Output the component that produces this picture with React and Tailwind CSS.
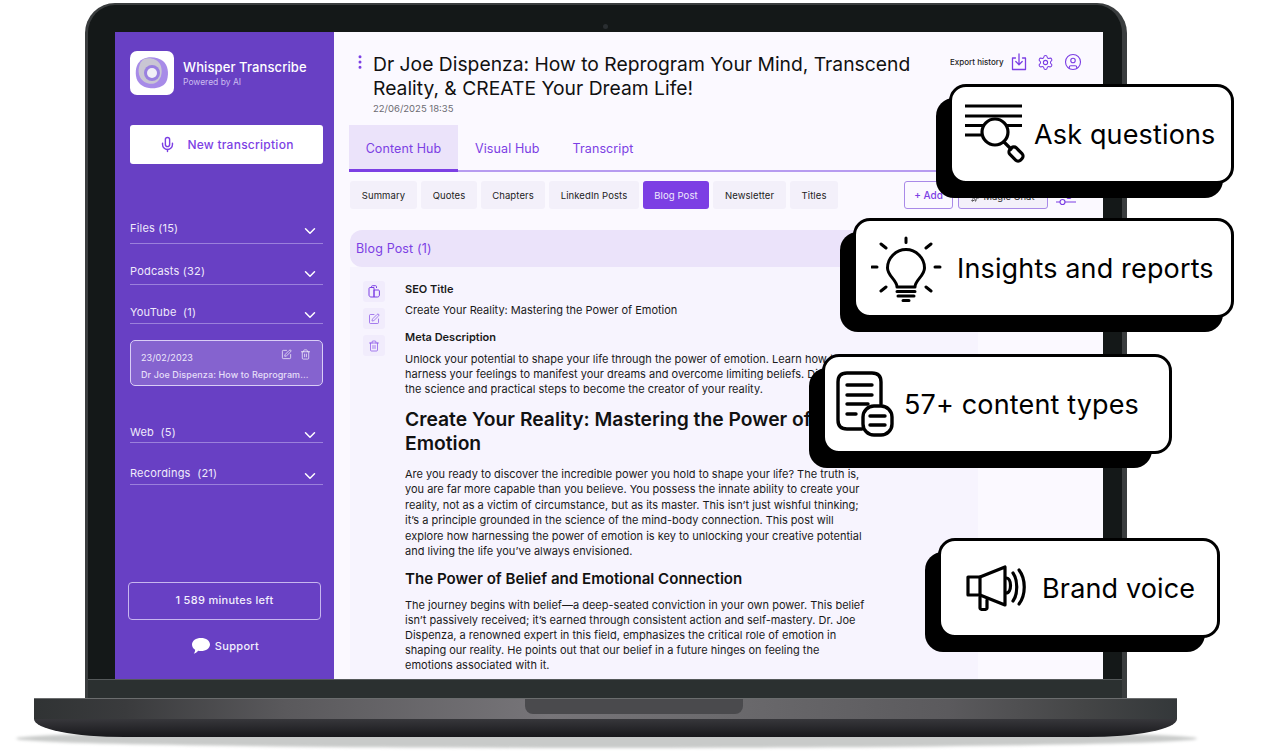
import React from "react";
import { Mic, ChevronDown, SquarePen, Trash2, Settings, CircleUser, EllipsisVertical, Sparkles } from "lucide-react";

const font = { fontFamily: "Inter, 'Liberation Sans', sans-serif" };

const chips = [
  { label: "Summary", w: "w-[67px]" },
  { label: "Quotes", w: "w-[56px]" },
  { label: "Chapters", w: "w-[64px]" },
  { label: "LinkedIn Posts", w: "w-[90px]" },
  { label: "Blog Post", w: "w-[66px]", active: true },
  { label: "Newsletter", w: "w-[73px]" },
  { label: "Titles", w: "w-[48px]" },
];

function Folder({ label, className }) {
  return (
    <div className={`flex w-[193px] items-center justify-between border-b border-[#9b80dc] text-[11px] tracking-[0.2px] whitespace-pre text-[#efeafb] ${className}`}>
      <span>{label}</span>
      <ChevronDown size={18} strokeWidth={2} className="mt-[4px] mr-[4px] text-white" />
    </div>
  );
}

function Logo() {
  return (
    <div className="flex h-[44px] w-[44px] items-center justify-center rounded-[7px] bg-white">
      <svg width="34" height="34" viewBox="0 0 34 34">
        <path d="M8 3 C14 0 23 1 28 5 C33 9 34 17 32 24 C30 31 21 33 14 32 C7 31 2 27 1 20 C0 13 2 6 8 3Z" fill="#a78be8" />
        <path d="M9 3 C15 1 22 3 25 8 C28 14 27 22 22 26 C16 30 8 27 5 21 C2 15 4 6 9 3Z" fill="#c9c6d3" />
        <circle cx="17" cy="17" r="8" fill="#9a80e0" />
        <circle cx="17" cy="17" r="5" fill="#f1eff7" />
      </svg>
    </div>
  );
}

function ExportIcon() {
  return (
    <svg width="16" height="18" viewBox="0 0 16 18" fill="none" stroke="#7c3fe4" strokeWidth="1.3" strokeLinecap="round" strokeLinejoin="round">
      <path d="M4.500 5H1.500V16.500H14.500V5H11.500" />
      <path d="M8 1V11.500M4.800 8.500L8 11.700L11.200 8.500" />
    </svg>
  );
}

function PasteIcon() {
  return (
    <svg width="12" height="13" viewBox="0 0 12 13" fill="none" stroke="#7c3fe4" strokeWidth="1" strokeLinejoin="round">
      <path d="M3.500 3V1.500C3.500 1 4 .7 4.500 .7H7.500C8 .7 8.500 1 8.500 1.500V3" />
      <path d="M1 3.500C1 3 1.500 2.500 2 2.500H6V12H3C1.800 12 1 11 1 10Z" />
      <path d="M6 5H10.500C11 5 11.400 5.500 11.400 6V10C11.400 11.200 10.600 12 9.500 12H6Z" />
    </svg>
  );
}

function ActionButton({ children }) {
  return <div className="flex h-[21px] w-[22px] items-center justify-center rounded-[3px] bg-[#f1ecfc]">{children}</div>;
}

function AskIcon() {
  return (
    <svg width="62" height="60" viewBox="0 0 62 60" fill="none" stroke="#000" strokeWidth="3.2" strokeLinecap="round" strokeLinejoin="round">
      <path d="M1 2H58M1 12H58M1 21.500H19M43 21.500H58M1 31H17" strokeLinecap="butt" />
      <circle cx="31" cy="28" r="13" />
      <path d="M40 38L47 45" />
      <rect x="-4.500" y="-7.500" width="9" height="15" rx="3.500" transform="translate(52 50) rotate(-45)" />
    </svg>
  );
}

function BulbIcon() {
  return (
    <svg width="72" height="70" viewBox="0 0 72 70" fill="none" stroke="#000" strokeWidth="3" strokeLinecap="round" strokeLinejoin="round">
      <g transform="translate(0 1)">
        <path d="M35 4V8.500M10 10L15 14M60 10L55 14M1 33H6M64 33H69M10 57L15 53M60 57L55 53" />
        <path d="M26 53C26 46 16.500 42 16.500 34C16.500 24 25 15.500 35 15.500C45 15.500 53.500 24 53.500 34C53.500 42 44 46 44 53Z" />
        <path d="M26 57.500H44M27 62H43M32 66.500H38" />
      </g>
    </svg>
  );
}

function DocsIcon() {
  return (
    <svg width="58" height="66" viewBox="0 0 58 66" fill="none" stroke="#000" strokeWidth="3.4" strokeLinecap="round" strokeLinejoin="round">
      <path d="M26 58H11C5 58 2 55 2 49V11C2 5 5 2 11 2H36C42 2 45 5 45 11V33" />
      <path d="M11 14H36M11 24H36M11 33H32M11 43H20" />
      <rect x="27" y="35" width="29" height="29" rx="11" fill="#fff" />
      <path d="M34 45H49M34 54H49" />
    </svg>
  );
}

function MegaphoneIcon() {
  return (
    <svg width="62" height="48" viewBox="0 0 62 48" fill="none" stroke="#000" strokeWidth="3.2" strokeLinecap="round" strokeLinejoin="round">
      <path d="M2 13H14L39 3V41L14 31H2Z" />
      <path d="M14 13V31" />
      <path d="M14 33V44C14 46 21 46 21 44V36" />
      <path d="M40 14C46 14 46 29 40 29" />
      <path d="M47 9C52 16 52 30 47 37" />
      <path d="M53 6C60 15 60 31 53 40" />
    </svg>
  );
}

function Callout({ className, shadow, icon, text }) {
  return (
    <div className={`absolute h-[100px] ${className}`}>
      <div className={`absolute top-[14px] -left-[13px] h-[100px] rounded-[18px] bg-black ${shadow}`} />
      <div className="relative flex h-full items-center rounded-[17px] border-[3px] border-black bg-white text-[27px] tracking-[0.15px] whitespace-nowrap text-black" style={font}>
        {icon}
        <span className="pt-[3px]">{text}</span>
      </div>
    </div>
  );
}

export default function App() {
  return (
    <div className="relative h-[751px] w-[1263px] overflow-hidden bg-white" style={font}>
      {/* ground shadow */}
      <div className="absolute top-[729px] left-[16px] h-[19px] w-[1181px] rounded-[50%] bg-[#c8cac9] blur-[1.5px]" />

      <div className="relative pt-[3px]">
        {/* lid */}
        <div className="ml-[85px] w-[1042px] overflow-hidden rounded-t-[30px] border-t-2 border-r-[5px] border-l-[3px] border-[#3a3d3e] bg-[#141818]">
          <div className="flex h-[27px] items-center justify-center">
            <div className="mt-[16px] h-[5px] w-[5px] rounded-full bg-[#2a2e31]" />
          </div>
          <div className="ml-[27px] flex h-[647px] w-[988px] overflow-hidden bg-[#fbf9ff]">
            {/* sidebar */}
            <aside className="flex h-full w-[219px] shrink-0 flex-col bg-[#6840c4] pl-[15px]">
              <div className="mt-[19px] flex items-center gap-[9px]">
                <Logo />
                <div className="pt-[1px]">
                  <div className="text-[13px] leading-[16px] font-medium tracking-[0.1px] text-white">Whisper Transcribe</div>
                  <div className="mt-[1px] text-[8.500px] leading-[12px] text-[#cbbdf0]">Powered by AI</div>
                </div>
              </div>
              <div className="mt-[30px] flex h-[39px] w-[193px] items-center justify-center gap-[11px] rounded-[3px] bg-white text-[12px] font-medium tracking-[0.25px] text-[#7c3fe4]">
                <Mic size={17} strokeWidth={2} />
                New transcription
              </div>
              <Folder label="Files (15)" className="mt-[50px] h-[30px]" />
              <Folder label="Podcasts (32)" className="mt-[15px] h-[26px]" />
              <Folder label="YouTube  (1)" className="mt-[17px] h-[22px]" />
              <div className="mt-[16px] h-[46px] w-[193px] rounded-[5px] border border-[#d9cdf6] bg-[#8563cf] px-[10px] pt-[10px]">
                <div className="flex h-[13px] items-center justify-between pr-[1px] text-[9px] leading-[13px] tracking-[0.1px] text-[#eee9fb]">
                  <span>23/02/2023</span>
                  <span className="mb-[6px] flex gap-[8px] text-white">
                    <SquarePen size={11} strokeWidth={1.5} />
                    <Trash2 size={11} strokeWidth={1.5} />
                  </span>
                </div>
                <div className="mt-[5px] text-[9px] leading-[12px] font-medium tracking-[0.1px] whitespace-nowrap text-[#e6dff9]">Dr Joe Dispenza: How to Reprogram...</div>
              </div>
              <Folder label="Web  (5)" className="mt-[37px] h-[20px]" />
              <Folder label="Recordings  (21)" className="mt-[20px] h-[22px]" />
              <div className="mt-[97px] -ml-[2px] flex h-[38px] w-[193px] items-center justify-center rounded-[4px] border border-[#c7b6ef] pb-[1px] text-[11px] font-medium tracking-[0.3px] text-[#f3effd]">
                1 589 minutes left
              </div>
              <div className="mt-[18px] flex items-center justify-center gap-[5px] pr-[13px] text-[11px] font-medium tracking-[0.3px] text-[#f3effd]">
                <svg width="18" height="16" viewBox="0 0 18 16" fill="#fff">
                  <path d="M9 0C14 0 18 2.700 18 6.500C18 10.300 14 13 9 13C8 13 7 12.900 6.200 12.700C5 14.200 3.200 15.400 1.800 15.700C2.700 14.600 3.200 13.200 3.100 11.800C1.200 10.600 0 8.700 0 6.500C0 2.700 4 0 9 0Z" />
                </svg>
                Support
              </div>
            </aside>

            {/* main */}
            <main className="min-w-0 flex-1 pl-[15px] text-[#111]">
              <div className="relative h-[93px]">
                <EllipsisVertical size={18} strokeWidth={2} className="absolute top-[21px] left-[2px] text-[#7c3fe4]" />
                <div className="flex pt-[20px] pl-[24px]">
                  <div className="w-[560px] shrink-0">
                    <h1 className="text-[19.300px] leading-[24px] font-normal whitespace-nowrap text-[#111]">
                      Dr Joe Dispenza: How to Reprogram Your Mind, Transcend
                      <br />
                      Reality, &amp; CREATE Your Dream Life!
                    </h1>
                    <div className="mt-[2px] text-[9.500px] leading-[14px] text-[#6b6b72]">22/06/2025 18:35</div>
                  </div>
                  <div className="ml-[17px] flex h-[20px] items-center text-[8px] font-medium whitespace-nowrap text-[#222]">
                    Export history
                    <span className="ml-[7px]"><ExportIcon /></span>
                    <Settings size={17} strokeWidth={1.5} className="ml-[10px] text-[#7c3fe4]" />
                    <CircleUser size={18} strokeWidth={1.5} className="ml-[10px] text-[#7c3fe4]" />
                  </div>
                </div>
              </div>

              <div className="flex h-[47px] w-[726px] items-center border-b-2 border-[#b79cf0] text-[12.500px] tracking-[0.1px] text-[#7c3fe4]">
                <div className="-mb-[2px] flex h-[47px] w-[109px] items-center justify-center border-b-[3px] border-[#7c3fe4] bg-[#ebe3fa] pt-[4px]">Content Hub</div>
                <div className="ml-[17px] pt-[4px]">Visual Hub</div>
                <div className="ml-[33px] pt-[4px]">Transcript</div>
              </div>

              <div className="mt-[8px] flex h-[29px] items-center">
                <div className="flex gap-[4px] pl-[1px]">
                  {chips.map((chip) => (
                    <div
                      key={chip.label}
                      className={`flex h-[28px] items-center justify-center rounded-[3px] pt-[3px] text-[9.500px] tracking-[0.1px] whitespace-nowrap ${chip.w} ${chip.active ? "bg-[#7c3fe4] text-[#efe8fd]" : "bg-[#f3f0fa] text-[#222]"}`}
                    >
                      {chip.label}
                    </div>
                  ))}
                </div>
                <div className="ml-[66px] flex h-[28px] w-[49px] items-center justify-center rounded-[3px] border border-[#a98ae8] pt-[2px] text-[10px] font-medium text-[#7c3fe4]">+ Add</div>
                <div className="ml-[5px] flex h-[28px] w-[90px] items-center justify-center gap-[3px] rounded-[3px] border border-[#a98ae8] bg-[#f3f0fa] pt-[6px] text-[9.500px] text-[#333]">
                  <Sparkles size={9} />
                  Magic Chat
                </div>
                <svg width="20" height="14" viewBox="0 0 20 14" fill="none" stroke="#7c3fe4" strokeWidth="1.200" className="mt-[8px] ml-[8px]">
                  <path d="M0 4H20M0 10H4M9 10H20" />
                  <circle cx="6.500" cy="10" r="2.500" />
                  <circle cx="13" cy="4" r="2.500" />
                </svg>
              </div>

              <div className="mt-[21px] ml-[1px] flex h-[37px] items-center rounded-l-[12px] bg-[#ebe3fa] pt-[2px] pl-[6px] text-[12.500px] tracking-[0.15px] text-[#7c3fe4]">Blog Post (1)</div>

              <div className="ml-[1px] flex h-[412px] w-[628px] bg-[#f7f4fe] pt-[14px] pl-[13px]">
                <div className="flex w-[42px] shrink-0 flex-col gap-[6px]">
                  <ActionButton><PasteIcon /></ActionButton>
                  <ActionButton><SquarePen size={12} strokeWidth={1.3} className="text-[#7c3fe4]" /></ActionButton>
                  <ActionButton><Trash2 size={12} strokeWidth={1.3} className="text-[#7c3fe4]" /></ActionButton>
                </div>
                <article className="mt-[1px] text-[11px] leading-[15px] whitespace-nowrap text-[#1a1a1a]">
                  <div className="font-semibold">SEO Title</div>
                  <p className="mt-[6px]">Create Your Reality: Mastering the Power of Emotion</p>
                  <div className="mt-[12px] font-semibold">Meta Description</div>
                  <p className="mt-[7px]">
                    Unlock your potential to shape your life through the power of emotion. Learn how to
                    <br />
                    harness your feelings to manifest your dreams and overcome limiting beliefs. Dive into
                    <br />
                    the science and practical steps to become the creator of your reality.
                  </p>
                  <h2 className="mt-[10px] text-[19.300px] leading-[24px] font-semibold tracking-normal text-[#111]">
                    Create Your Reality: Mastering the Power of
                    <br />
                    Emotion
                  </h2>
                  <p className="mt-[12px] leading-[15.400px]">
                    Are you ready to discover the incredible power you hold to shape your life? The truth is,
                    <br />
                    you are far more capable than you believe. You possess the innate ability to create your
                    <br />
                    reality, not as a victim of circumstance, but as its master. This isn’t just wishful thinking;
                    <br />
                    it’s a principle grounded in the science of the mind-body connection. This post will
                    <br />
                    explore how harnessing the power of emotion is key to unlocking your creative potential
                    <br />
                    and living the life you’ve always envisioned.
                  </p>
                  <h3 className="mt-[10px] text-[15.100px] leading-[20px] font-semibold tracking-normal text-[#111]">The Power of Belief and Emotional Connection</h3>
                  <p className="mt-[9px] leading-[15px]">
                    The journey begins with belief—a deep-seated conviction in your own power. This belief
                    <br />
                    isn’t passively received; it’s earned through consistent action and self-mastery. Dr. Joe
                    <br />
                    Dispenza, a renowned expert in this field, emphasizes the critical role of emotion in
                    <br />
                    shaping our reality. He points out that our belief in a future hinges on feeling the
                    <br />
                    emotions associated with it.
                  </p>
                </article>
              </div>
            </main>
          </div>
          <div className="h-[19px] border-t border-[#55595a] bg-[#2b3030]" />
        </div>

        {/* base */}
        <div className="relative ml-[34px] h-[39px] w-[1143px] overflow-hidden rounded-b-[90px_18px]">
          <div className="h-[21px] border-t border-[#6b6d6e] bg-[linear-gradient(90deg,#303334_0%,#3a3b3d_8%,#5a595c_22%,#777579_45%,#6b6a6d_60%,#5b5a5d_80%,#444546_92%,#34383a_100%)]">
            <div className="ml-[491px] h-[15px] w-[218px] rounded-b-[8px] bg-[#4a4a4d]" />
          </div>
          <div className="h-[18px] bg-[linear-gradient(180deg,#37373b_0%,#18181b_100%)]" />
        </div>
      </div>

      <Callout
        className="top-[84px] left-[949px] w-[285px]"
        shadow="w-[287px]"
        icon={<span className="mr-[8px] ml-[12px]"><AskIcon /></span>}
        text="Ask questions"
      />
      <Callout
        className="top-[218px] left-[853px] w-[381px]"
        shadow="w-[383px]"
        icon={<span className="mr-[14px] ml-[15px]"><BulbIcon /></span>}
        text="Insights and reports"
      />
      <Callout
        className="top-[354px] left-[822px] w-[350px]"
        shadow="w-[343px]"
        icon={<span className="mr-[10px] ml-[11px]"><DocsIcon /></span>}
        text="57+ content types"
      />
      <Callout
        className="top-[538px] left-[938px] w-[282px]"
        shadow="w-[280px]"
        icon={<span className="mr-[14px] ml-[25px]"><MegaphoneIcon /></span>}
        text="Brand voice"
      />
    </div>
  );
}
